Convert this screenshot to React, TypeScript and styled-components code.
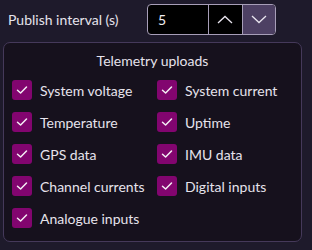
import React from "react";
import styled, { createGlobalStyle } from "styled-components";

const Global = createGlobalStyle`
  html, body { margin: 0; padding: 0; background: #1e1a2b; }
  body { font-family: Lato, "Open Sans", sans-serif; color: #e6e3ec; }
`;

const Page = styled.div`
  width: 312px;
  height: 250px;
  box-sizing: border-box;
  padding: 4px 10px 0 3px;
  display: flex;
  flex-direction: column;
  gap: 7px;
`;

const TopRow = styled.div`
  display: flex;
  align-items: center;
  height: 31px;
`;

const Label = styled.span`
  font-size: 14px;
  width: 144px;
  padding-left: 5px;
  box-sizing: border-box;
`;

const Spin = styled.div`
  display: flex;
  width: 129px;
  height: 31px;
  box-sizing: border-box;
  border: 1px solid #a79eb8;
  border-radius: 4px;
  overflow: hidden;
  background: #000;
`;

const Value = styled.div`
  box-sizing: border-box;
  width: 61px;
  padding-left: 10px;
  font-size: 14px;
  display: flex;
  align-items: center;
  color: #f0eef4;
  border-right: 1px solid #a79eb8;
`;

const SpinBtn = styled.div<{ $active?: boolean }>`
  flex: 1;
  display: flex;
  align-items: center;
  justify-content: center;
  background: ${(p) => (p.$active ? "#4d4063" : "#000")};
  & + & { border-left: 1px solid #a79eb8; }
`;

const Panel = styled.div`
  box-sizing: border-box;
  width: 299px;
  height: 200px;
  border: 1px solid #45395a;
  border-radius: 7px;
  background: #16111d;
  padding: 8px 8px 0 8px;
`;

const Title = styled.div`
  text-align: center;
  font-size: 14px;
  line-height: 19px;
  margin-bottom: 10px;
`;

const Grid = styled.div`
  display: grid;
  grid-template-columns: 145px 1fr;
  row-gap: 12px;
`;

const Item = styled.label`
  display: flex;
  align-items: center;
  gap: 8px;
  font-size: 14px;
  height: 20px;
`;

const Box = styled.span`
  width: 20px;
  height: 20px;
  border-radius: 3px;
  background: #82056f;
  display: flex;
  align-items: center;
  justify-content: center;
`;

const Check = () => (
  <svg width="12" height="10" viewBox="0 0 12 10">
    <path d="M1.5 5.2 L4.6 8 L10.5 2" stroke="#f4eef4" strokeWidth="1.5" fill="none" strokeLinecap="round" strokeLinejoin="round" />
  </svg>
);

const items = [
  "System voltage",
  "System current",
  "Temperature",
  "Uptime",
  "GPS data",
  "IMU data",
  "Channel currents",
  "Digital inputs",
  "Analogue inputs",
];

export default function App() {
  return (
    <>
      <Global />
      <Page>
        <TopRow>
          <Label>Publish interval (s)</Label>
          <Spin>
            <Value>5</Value>
            <SpinBtn>
              <svg width="16" height="9" viewBox="0 0 16 9">
                <path d="M1 8 L8 1.5 L15 8" stroke="#e8e4ee" strokeWidth="1.3" fill="none" />
              </svg>
            </SpinBtn>
            <SpinBtn $active>
              <svg width="16" height="9" viewBox="0 0 16 9">
                <path d="M1 1 L8 7.5 L15 1" stroke="#e8e4ee" strokeWidth="1.3" fill="none" />
              </svg>
            </SpinBtn>
          </Spin>
        </TopRow>
        <Panel>
          <Title>Telemetry uploads</Title>
          <Grid>
            {items.map((t) => (
              <Item key={t}>
                <Box>
                  <Check />
                </Box>
                {t}
              </Item>
            ))}
          </Grid>
        </Panel>
      </Page>
    </>
  );
}
